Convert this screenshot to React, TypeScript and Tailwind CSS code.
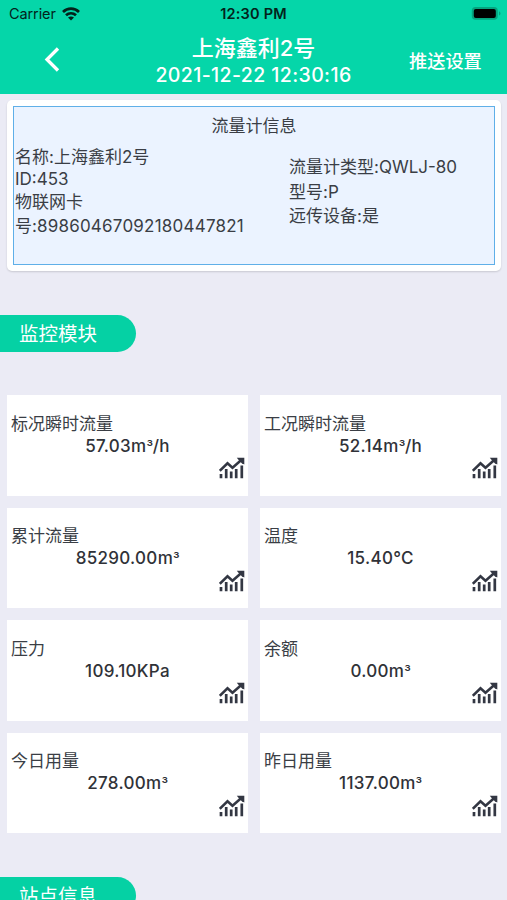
const metrics = [
  { label: "标况瞬时流量", value: "57.03m", unit: "³", suffix: "/h" },
  { label: "工况瞬时流量", value: "52.14m", unit: "³", suffix: "/h" },
  { label: "累计流量", value: "85290.00m", unit: "³", suffix: "" },
  { label: "温度", value: "15.40°C", unit: "", suffix: "" },
  { label: "压力", value: "109.10KPa", unit: "", suffix: "" },
  { label: "余额", value: "0.00m", unit: "³", suffix: "" },
  { label: "今日用量", value: "278.00m", unit: "³", suffix: "" },
  { label: "昨日用量", value: "1137.00m", unit: "³", suffix: "" },
];

function WifiIcon() {
  return (
    <svg className="h-[14px] w-[18px]" viewBox="0 0 18 14" fill="none" stroke="#03231b" strokeWidth="2.7">
      <path d="M1 5C5.500.6 12.500.6 17 5" />
      <path d="M4 8.300C6.900 5.600 11.100 5.600 14 8.300" />
      <path d="M6 10.500C8 9 10 9 12 10.500L9 13.600Z" fill="#03231b" stroke="none" />
    </svg>
  );
}

function BatteryIcon() {
  return (
    <svg className="h-[15px] w-[30px]" viewBox="0 0 30 15">
      <rect x=".8" y="1" width="26" height="12.800" rx="3.800" fill="#05a47f" />
      <rect x="2.800" y="2.900" width="22" height="9" rx="2" fill="#000" />
      <path d="M28 5.200c2 .8 2 3.600 0 4.400Z" fill="#05a47f" />
    </svg>
  );
}

function TrendIcon() {
  return (
    <svg className="h-[22px] w-[26px]" viewBox="0 0 26 22" fill="none" stroke="#333743">
      <path d="M.8 13.800L8.500 6.300L13.500 10.800L22 3.200" strokeWidth="2.500" />
      <path d="M17.800 .8H25.300V7.600L22.800 6.300L20 3.500Z" fill="#333743" stroke="none" />
      <path d="M2 17V21.300M7.200 12V21.300M12.200 14.500V21.300M17.200 12V21.300M22.800 8.500V21.300" strokeWidth="2.700" />
    </svg>
  );
}

function SectionTag({ text }: { text: string }) {
  return (
    <div className="flex h-[37px] w-[136px] shrink-0 items-center rounded-r-full bg-[#05d1a4] pl-[19px] pt-[2px] text-[19.5px] text-white">
      {text}
    </div>
  );
}

export default function App() {
  return (
    <div className="flex h-[900px] w-[507px] flex-col overflow-hidden bg-[#ebebf5] font-['Inter','Noto_Sans_CJK_SC',sans-serif] text-[#3a3e45]">
      <header className="h-[94px] shrink-0 bg-[#05d6a9]">
        <div className="grid h-[27px] grid-cols-3 items-center text-[#03231b]">
          <div className="flex items-center gap-[6px] pl-[9px] text-[14.5px]">
            <span className="tracking-[-0.1px]">Carrier</span>
            <WifiIcon />
          </div>
          <div className="text-center text-[14.5px] font-semibold tracking-[0.2px] text-[#03231b]">12:30 PM</div>
          <div className="flex justify-end pr-[6px]">
            <BatteryIcon />
          </div>
        </div>
        <div className="grid h-[67px] grid-cols-[104px_1fr_104px] text-white">
          <div className="flex items-start pl-[44px] pt-[20px]">
            <svg className="h-[25px] w-[16px]" viewBox="0 0 16 25" fill="none" stroke="white" strokeWidth="3.300">
              <path d="M14 1.500L3 12.500L14 23.500" />
            </svg>
          </div>
          <div className="flex flex-col items-center pt-[8px] font-medium">
            <div className="text-[22px] leading-[27px]">上海鑫利2号</div>
            <div className="text-[19.5px] leading-[26px] tracking-[0.4px]">2021-12-22 12:30:16</div>
          </div>
          <div className="ml-[6px] pt-[20px] text-[18.2px] font-medium leading-[28px] whitespace-nowrap">推送设置</div>
        </div>
      </header>

      <section className="ml-[7px] mr-[6px] mt-[6px] h-[171px] shrink-0 rounded-[5px] bg-white p-[6px] shadow-[0_1px_2px_rgba(0,0,0,0.15)]">
        <div className="h-[159px] border border-[#5fafe8] bg-[#ebf3ff] text-[17px]">
          <h2 className="pt-[6px] text-center leading-[26px]">流量计信息</h2>
          <div className="flex">
            <div className="w-[275px] pl-px pt-[6px]">
              <p className="leading-[24px]">名称:上海鑫利2号</p>
              <p className="leading-[21px]">ID:453</p>
              <p className="leading-[24px]">物联网卡<br />号:<span className="tracking-[0.22px]">89860467092180447821</span></p>
            </div>
            <div className="pt-[16px] leading-[24.500px]">
              <p>流量计类型:QWLJ-80</p>
              <p>型号:P</p>
              <p>远传设备:是</p>
            </div>
          </div>
        </div>
      </section>

      <div className="mt-[44px] shrink-0">
        <SectionTag text="监控模块" />
      </div>

      <main className="mx-[7px] mt-[43px] grid shrink-0 grid-cols-[241px_241px] gap-x-[12px] gap-y-[12px]">
        {metrics.map((m) => (
          <article key={m.label} className="flex h-[100.500px] flex-col bg-white pt-[17.500px]">
            <div className="pl-[4px] text-[17px] leading-[22px]">{m.label}</div>
            <div className="text-center text-[17px] font-medium leading-[22px] tracking-[0.3px] text-[#303238]">
              {m.value}
              {m.unit && <span className="text-[14.5px] leading-none tracking-[-0.3px]">{m.unit}</span>}
              {m.suffix}
            </div>
            <div className="flex justify-end pr-[3px] pt-[0.500px]">
              <TrendIcon />
            </div>
          </article>
        ))}
      </main>

      <div className="mt-[44px] shrink-0">
        <SectionTag text="站点信息" />
      </div>
    </div>
  );
}
